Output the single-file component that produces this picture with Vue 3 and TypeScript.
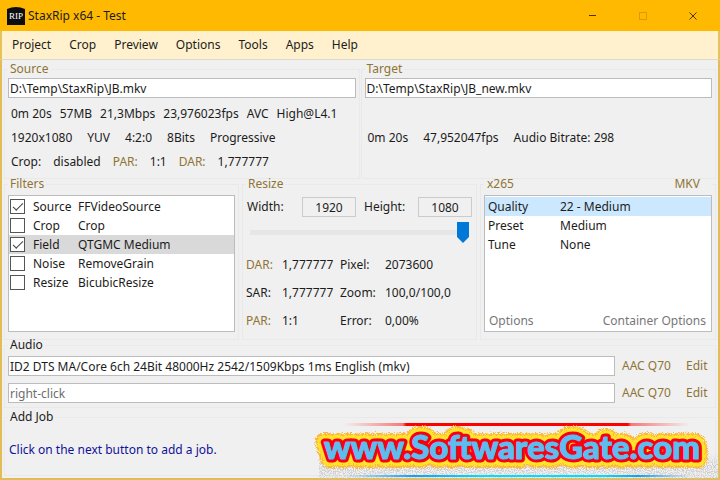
<script setup lang="ts">
import { ref } from 'vue'

interface Filter { active: boolean; category: string; name: string }

const menus = ['Project', 'Crop', 'Preview', 'Options', 'Tools', 'Apps', 'Help']
const sourceFile = ref('D:\\Temp\\StaxRip\\JB.mkv')
const targetFile = ref('D:\\Temp\\StaxRip\\JB_new.mkv')
const stream = ['0m 20s', '57MB', '21,3Mbps', '23,976023fps', 'AVC', 'High@L4.1']
const format = ['1920x1080', 'YUV', '4:2:0', '8Bits', 'Progressive']
const output = ['0m 20s', '47,952047fps', 'Audio Bitrate: 298']
const filters = ref<Filter[]>([
  { active: true, category: 'Source', name: 'FFVideoSource' },
  { active: false, category: 'Crop', name: 'Crop' },
  { active: true, category: 'Field', name: 'QTGMC Medium' },
  { active: false, category: 'Noise', name: 'RemoveGrain' },
  { active: false, category: 'Resize', name: 'BicubicResize' },
])
const selectedFilter = ref(2)
const width = ref('1920')
const height = ref('1080')
const size = ref(100)
const encoder = [
  ['Quality', '22 - Medium'],
  ['Preset', 'Medium'],
  ['Tune', 'None'],
]
const selectedOption = ref(0)
const audio1 = ref('ID2 DTS MA/Core 6ch 24Bit 48000Hz 2542/1509Kbps 1ms English (mkv)')
const audio2 = ref('')
</script>

<template>
  <div class="window">
    <header class="titlebar">
      <svg class="logo" viewBox="0 0 18 18" aria-hidden="true">
        <path d="M0 2Q9 -2 18 2V18H0Z" fill="#0b0d10" />
        <text x="9" y="12" text-anchor="middle" class="logo-text">RIP</text>
      </svg>
      <h1>StaxRip x64 - Test</h1>
      <div class="caption">
        <button type="button" aria-label="Minimize">
          <svg viewBox="0 0 10 10"><path d="M1 4.5H8" stroke="#4a3500" fill="none" /></svg>
        </button>
        <button type="button" aria-label="Maximize" disabled>
          <svg viewBox="0 0 10 10"><path d="M1.5 1.5H8.5V8.5H1.5Z" stroke="#d99a08" fill="none" /></svg>
        </button>
        <button type="button" aria-label="Close">
          <svg viewBox="0 0 10 10"><path d="M1.5 1.5L8.5 8.5M8.5 1.5L1.5 8.5" stroke="#4a3500" fill="none" /></svg>
        </button>
      </div>
    </header>

    <nav class="menu">
      <button v-for="m in menus" :key="m" type="button">{{ m }}</button>
    </nav>

    <main class="body">
      <div class="files">
        <fieldset>
          <legend><label class="gold" for="source">Source</label></legend>
          <input id="source" v-model="sourceFile" class="box" type="text">
          <div class="info">
            <p class="tight"><span v-for="s in stream" :key="s">{{ s }}</span></p>
            <p class="loose"><span v-for="s in format" :key="s">{{ s }}</span></p>
            <p class="pairs">
              <span>Crop:</span><span>disabled</span>
              <a href="#par">PAR:</a><span>1:1</span>
              <a href="#dar">DAR:</a><span>1,777777</span>
            </p>
          </div>
        </fieldset>
        <fieldset>
          <legend><label class="gold" for="target">Target</label></legend>
          <input id="target" v-model="targetFile" class="box" type="text">
          <div class="info single">
            <p class="loose"><span v-for="s in output" :key="s">{{ s }}</span></p>
          </div>
        </fieldset>
      </div>

      <div class="settings">
        <fieldset>
          <legend class="gold">Filters</legend>
          <div class="list">
            <table class="filters">
              <tbody>
                <tr
                  v-for="(f, i) in filters" :key="f.category"
                  :class="{ picked: i === selectedFilter }" @click="selectedFilter = i"
                >
                  <td class="tick"><input :id="'f' + i" v-model="f.active" type="checkbox"></td>
                  <td class="category"><label :for="'f' + i">{{ f.category }}</label></td>
                  <td>{{ f.name }}</td>
                </tr>
              </tbody>
            </table>
          </div>
        </fieldset>

        <fieldset>
          <legend class="gold">Resize</legend>
          <div class="size">
            <label for="w">Width:</label>
            <input id="w" v-model="width" class="box number" type="text">
            <label for="h">Height:</label>
            <input id="h" v-model="height" class="box number" type="text">
          </div>
          <input v-model="size" class="slider" type="range" min="0" max="100" aria-label="Resize">
          <div class="ratios">
            <a href="#dar">DAR:</a><span>1,777777</span><span>Pixel:</span><span>2073600</span>
            <span>SAR:</span><span>1,777777</span><span>Zoom:</span><span>100,0/100,0</span>
            <a href="#par">PAR:</a><span>1:1</span><span>Error:</span><span>0,00%</span>
          </div>
        </fieldset>

        <fieldset>
          <legend class="wide"><a href="#x265">x265</a><a href="#mkv">MKV</a></legend>
          <div class="list">
            <table class="encoder">
              <tbody>
                <tr
                  v-for="(e, i) in encoder" :key="e[0]"
                  :class="{ chosen: i === selectedOption }" @click="selectedOption = i"
                >
                  <th scope="row">{{ e[0] }}</th>
                  <td>{{ e[1] }}</td>
                </tr>
              </tbody>
            </table>
            <div class="links">
              <a href="#options">Options</a><a href="#container">Container Options</a>
            </div>
          </div>
        </fieldset>
      </div>

      <fieldset class="audio">
        <legend>Audio</legend>
        <div class="track">
          <input v-model="audio1" class="box" type="text" aria-label="Audio track 1">
          <a href="#profile1">AAC Q70</a><a href="#edit1">Edit</a>
        </div>
        <div class="track">
          <input v-model="audio2" class="box" type="text" placeholder="right-click" aria-label="Audio track 2">
          <a href="#profile2">AAC Q70</a><a href="#edit2">Edit</a>
        </div>
      </fieldset>

      <fieldset class="job">
        <legend>Add Job</legend>
        <p>Click on the next button to add a job.</p>
      </fieldset>
    </main>

    <svg class="banner" viewBox="0 0 410 62">
      <defs>
        <linearGradient id="red">
          <stop offset="0" stop-color="#f00" stop-opacity="0" />
          <stop offset=".17" stop-color="#f00" stop-opacity=".5" />
          <stop offset=".18" stop-color="#f00" />
          <stop offset=".82" stop-color="#f00" />
          <stop offset=".83" stop-color="#f00" stop-opacity=".5" />
          <stop offset="1" stop-color="#f00" stop-opacity="0" />
        </linearGradient>
        <linearGradient id="blue">
          <stop offset="0" stop-color="#17a0f0" stop-opacity="0" />
          <stop offset=".2" stop-color="#17a0f0" />
          <stop offset=".4" stop-color="#0df" />
          <stop offset=".75" stop-color="#0df" />
          <stop offset=".85" stop-color="#17a0f0" />
          <stop offset="1" stop-color="#17a0f0" stop-opacity="0" />
        </linearGradient>
        <linearGradient id="fade" x1="0" y1="0" x2="0" y2="1">
          <stop offset="0" stop-color="#888" stop-opacity="0" />
          <stop offset=".5" stop-color="#888" stop-opacity=".9" />
          <stop offset="1" stop-color="#888" stop-opacity=".6" />
        </linearGradient>
        <filter id="grain" x="-5%" y="-20%" width="110%" height="140%">
          <feTurbulence type="fractalNoise" baseFrequency=".9" numOctaves="1" seed="4" result="n" />
          <feDisplacementMap in="SourceGraphic" in2="n" scale="8" xChannelSelector="R" yChannelSelector="G" />
          <feGaussianBlur stdDeviation=".4" />
        </filter>
        <filter id="speckle" x="0" y="0" width="100%" height="100%">
          <feTurbulence type="fractalNoise" baseFrequency=".9" numOctaves="2" seed="8" />
          <feColorMatrix values="0 0 0 0 .56  0 0 0 0 .56  0 0 0 0 .56  5 0 0 0 -2.1" />
          <feComposite in2="SourceGraphic" operator="in" />
        </filter>
      </defs>
      <rect x="9" y="36" width="400" height="26" fill="url(#fade)" filter="url(#speckle)" />
      <rect x="34" y="6" width="346" height="3" fill="url(#red)" />
      <rect x="34" y="58" width="346" height="2" fill="url(#blue)" />
      <g filter="url(#grain)">
        <text x="14" y="42" class="brand outer" aria-hidden="true">www.SoftwaresGate.com</text>
        <text x="14" y="42" class="brand glow" aria-hidden="true">www.SoftwaresGate.com</text>
      </g>
      <text x="14" y="42" class="brand rim" aria-hidden="true">www.SoftwaresGate.com</text>
      <text x="14" y="42" class="brand face">www.SoftwaresGate.com</text>
    </svg>
  </div>
</template>

<style>
body {
  margin: 0;
}
</style>

<style scoped>
.window {
  position: relative;
  box-sizing: border-box;
  display: flex;
  flex-direction: column;
  min-height: 100vh;
  background: #f0f0f0;
  color: #1c1c1c;
  font: 12px/18px "Noto Sans", "Open Sans", sans-serif;
}
.window *,
.window *::before {
  box-sizing: border-box;
}
button,
input {
  font: inherit;
  color: inherit;
}
button {
  padding: 0;
  border: 0;
  background: none;
}
p {
  margin: 0;
}
a {
  color: #8f7434;
  text-decoration: none;
}
.gold {
  color: #8f7434;
}
.titlebar {
  display: flex;
  align-items: center;
  height: 31px;
  padding-left: 7px;
  background: #ffb900;
}
.logo {
  width: 18px;
  height: 18px;
}
.logo-text {
  font: 9px "Liberation Serif", serif;
  fill: #fff;
}
h1 {
  flex: 1;
  margin: 0 0 0 3px;
  font-size: 12px;
  font-weight: 400;
}
.caption {
  display: flex;
  padding-right: 2px;
}
.caption button {
  display: grid;
  place-items: center;
  width: 50px;
  height: 30px;
}
.caption svg {
  width: 10px;
  height: 10px;
}
.menu {
  display: flex;
  gap: 18px;
  height: 29px;
  padding-left: 10px;
  border: solid #e4c25c;
  border-width: 0 2px;
  border-bottom: 1px solid #dcd9d0;
  background: #fff1ce;
}
.body {
  flex: 1;
  display: flex;
  flex-direction: column;
  padding: 0 2px 2px;
  border: 2px solid #e2bd55;
  border-top: 0;
}
fieldset {
  min-width: 0;
  margin: 0;
  padding: 0 3px 4px;
  border: 1px solid #e9e9e9;
}
legend {
  padding: 0 2px;
  height: 18px;
}
.files {
  display: grid;
  grid-template-columns: 1fr 1fr;
  gap: 1px;
  height: 115px;
}
.settings {
  display: grid;
  grid-template-columns: 235px 1fr 236px;
  gap: 3px;
  height: 161px;
}
.box {
  display: block;
  width: 100%;
  height: 20px;
  padding: 0 1px;
  border: 1px solid #bcbcbc;
  border-radius: 0;
  background: #fff;
  outline: 0;
}
.box::placeholder {
  color: #6d6d6d;
  opacity: 1;
}
.info {
  padding: 4px 3px 0;
}
.info p {
  display: flex;
  height: 24px;
  align-items: center;
  white-space: nowrap;
}
.info.single {
  padding-top: 28px;
}
.tight {
  gap: 8px;
}
.loose {
  gap: 15px;
}
.pairs {
  gap: 12px;
}
.list {
  display: flex;
  flex-direction: column;
  justify-content: space-between;
  height: 137px;
  margin-top: 2px;
  padding: 1px 0;
  border: 1px solid #bcbcbc;
  background: #fff;
}
table {
  width: 100%;
  border-collapse: collapse;
}
tr {
  height: 19px;
}
th,
td {
  padding: 0;
  font-weight: 400;
  text-align: left;
}
.picked {
  background: #d9d9d9;
}
.chosen {
  background: #cce8ff;
}
.tick {
  width: 24px;
}
.category {
  width: 45px;
}
.tick input {
  appearance: none;
  display: grid;
  place-items: center;
  width: 15px;
  height: 15px;
  margin: 0 0 0 1px;
  border: 1px solid #555;
  background: #fff;
}
.tick input:checked::before {
  content: "";
  width: 10px;
  height: 5px;
  border: solid #444;
  border-width: 0 0 1px 1px;
  transform: translateY(-1px) rotate(-45deg);
}
.encoder th {
  width: 75px;
  padding-left: 3px;
}
.links {
  display: flex;
  justify-content: space-between;
  padding: 0 5px 0 4px;
}
.links a {
  color: #777;
}
.wide {
  display: flex;
  justify-content: space-between;
  width: 100%;
  padding: 0 12px 0 3px;
}
.size {
  display: grid;
  grid-template-columns: 54px 54px 60px 54px;
  column-gap: 1px;
  align-items: center;
  padding: 4px 0 0 1px;
}
.size label:nth-of-type(2) {
  padding-left: 7px;
}
.number {
  background: #f0f0f0;
  border-color: #cbcbcb;
  text-align: center;
}
.slider {
  appearance: none;
  display: block;
  width: 100%;
  height: 21px;
  margin: 5px 0 8px;
  padding: 0 4px;
  background: none;
}
.slider::-webkit-slider-runnable-track {
  height: 5px;
  background: #e6e6e6;
}
.slider::-webkit-slider-thumb {
  appearance: none;
  width: 12px;
  height: 21px;
  margin-top: -8px;
  background: #0078d7;
  clip-path: polygon(0 0, 100% 0, 100% 72%, 50% 100%, 0 72%);
}
.ratios {
  display: grid;
  grid-template-columns: 36px 58px 45px 1fr;
  line-height: 28px;
}
.audio {
  height: 72px;
  padding-top: 2px;
}
.track {
  display: grid;
  grid-template-columns: 1fr 57px 19px;
  column-gap: 7px;
  align-items: center;
  margin-bottom: 7px;
  padding-right: 7px;
  white-space: nowrap;
}
.job {
  height: 68px;
}
.job p {
  padding: 15px 0 0 1px;
  color: #10109a;
}
.banner {
  position: absolute;
  right: 0;
  bottom: 1px;
  width: 410px;
  height: 62px;
  pointer-events: none;
}
.brand {
  font: 900 33px Lato, sans-serif;
  stroke-linejoin: round;
}
.outer {
  fill: #ffb63c;
  stroke: #ffb63c;
  stroke-width: 18px;
}
.glow {
  fill: #ffe62a;
  stroke: #ffe62a;
  stroke-width: 14px;
}
.rim {
  fill: #fa0010;
  stroke: #fa0010;
  stroke-width: 7px;
}
.face {
  fill: #5bbdf0;
  stroke: #5bbdf0;
  stroke-width: 1px;
}
</style>
